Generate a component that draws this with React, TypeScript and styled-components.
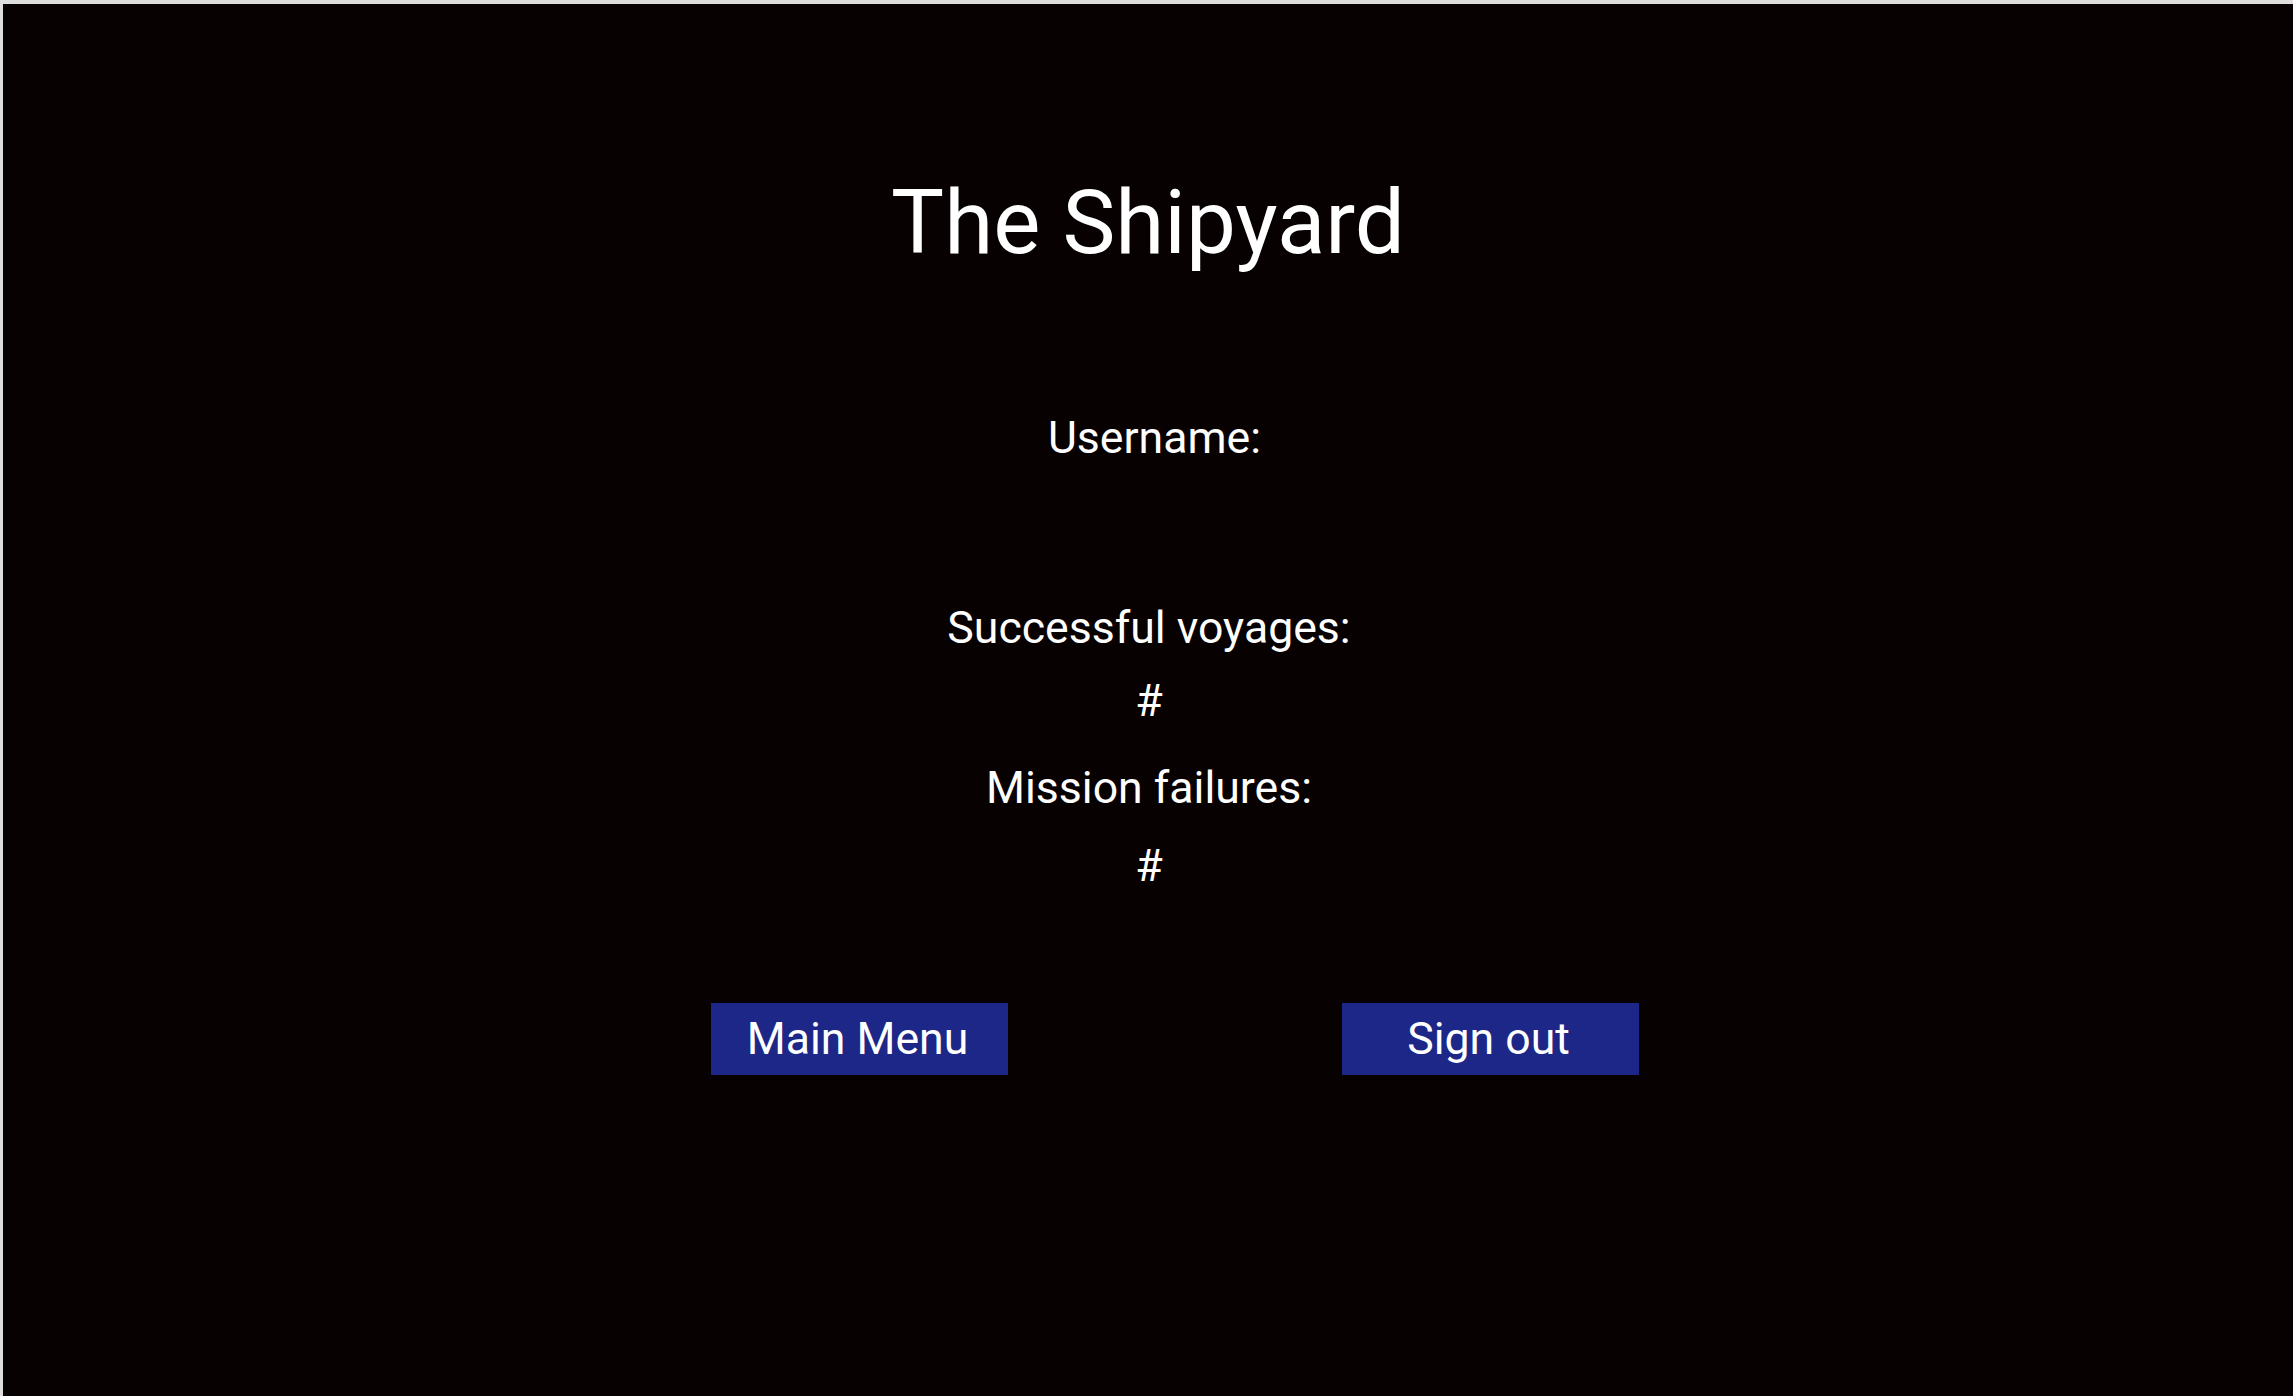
import React from "react";
import styled, { createGlobalStyle } from "styled-components";

const GlobalStyle = createGlobalStyle`
  html, body {
    margin: 0;
    padding: 0;
    background: #dedede;
  }
  body {
    font-family: Roboto, "Noto Sans", "Liberation Sans", sans-serif;
  }
`;

const Frame = styled.div`
  margin: 4px 0 0 3px;
  height: 1392px;
  background: #070102;
  color: #ffffff;
  display: flex;
  flex-direction: column;
  align-items: center;
  padding-top: 174px;
  box-sizing: border-box;
`;

const Title = styled.h1`
  margin: 0;
  font-size: 89px;
  line-height: 1;
  font-weight: 400;
`;

const Label = styled.div<{ $top: number; $shift?: number }>`
  margin-top: ${(p) => p.$top}px;
  padding-left: ${(p) => p.$shift ?? 2}px;
  font-size: 44.6px;
  line-height: 1;
`;

const ButtonRow = styled.div`
  margin-top: 114px;
  display: flex;
  gap: 334px;
  padding-left: 54px;
`;

const Button = styled.button`
  width: 297px;
  height: 72px;
  border: none;
  background: #1c2788;
  color: #ffffff;
  font-family: Roboto, "Noto Sans", "Liberation Sans", sans-serif;
  font-size: 44.6px;
  line-height: 1;
  padding: 0 4px 0 0;
  cursor: pointer;
`;

export default function App() {
  return (
    <>
      <GlobalStyle />
      <Frame>
        <Title>The Shipyard</Title>
        <Label $top={149} $shift={13}>Username:</Label>
        <Label $top={145}>Successful voyages:</Label>
        <Label $top={29}>#</Label>
        <Label $top={42}>Mission failures:</Label>
        <Label $top={34}>#</Label>
        <ButtonRow>
          <Button>Main Menu</Button>
          <Button>Sign out</Button>
        </ButtonRow>
      </Frame>
    </>
  );
}
